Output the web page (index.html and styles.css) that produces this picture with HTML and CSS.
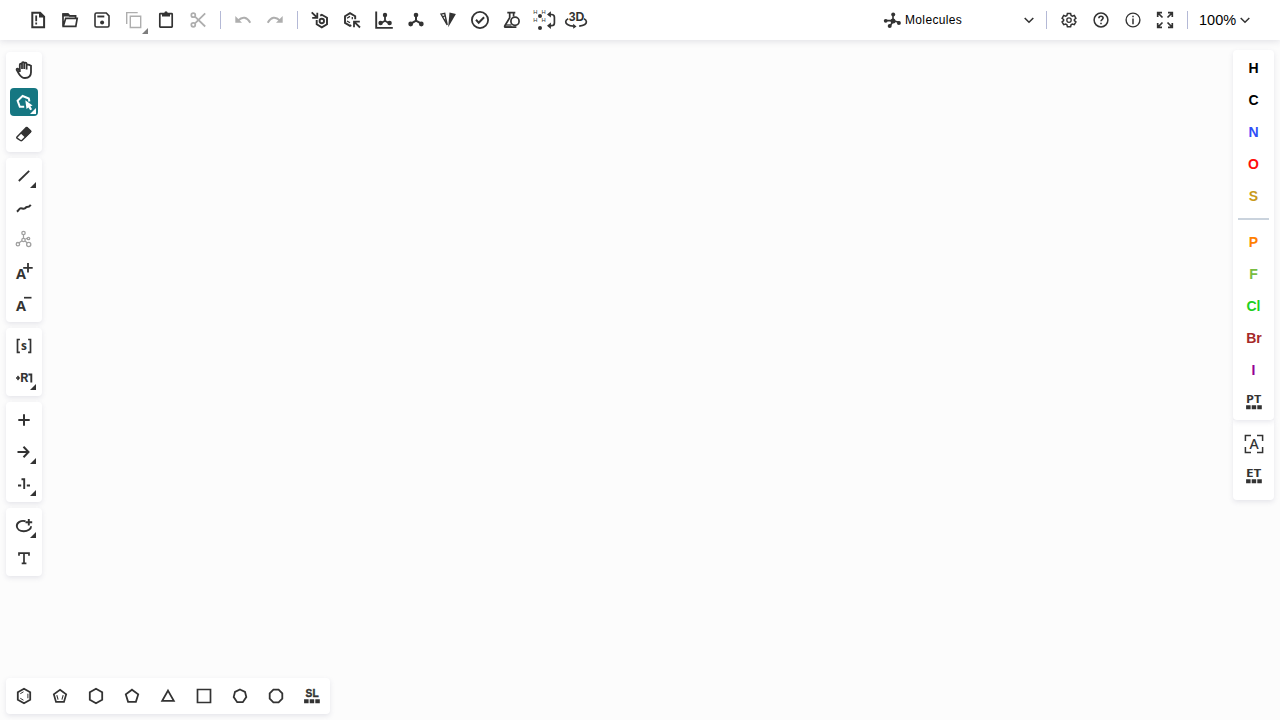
FILE: index.html
```html
<!DOCTYPE html>
<html lang="en">
<head>
<meta charset="utf-8">
<title>Ketcher</title>
<link rel="stylesheet" href="styles.css">
</head>
<body>
<div class="app">
<header class="topbar">
  <button class="btn"><svg viewBox="0 0 28 28"><path d="M8.300 6.700h7.800l4 4v10.600H8.300z" stroke-width="2"/><path d="M15 6v5.500h5.500z" class="solid"/><path d="M12.200 9.500v5.700M12.200 16.600v2" stroke-width="1.800"/></svg></button>
  <button class="btn"><svg viewBox="0 0 28 28"><path d="M7 20.300V8h4.800l1.800 1.800h6v2.300M7.300 20.300l2.400-8h11.500l-1.400 8z" stroke-width="1.700"/><path d="M6.500 7.200h5.800l1.600 2H19.500v1.300H6.500z" class="solid"/></svg></button>
  <button class="btn"><svg viewBox="0 0 28 28"><path d="M8.500 7h9.800l2.700 2.900v9.600q0 1.500-1.500 1.500h-11Q7 21 7 19.500v-11Q7 7 8.500 7z" stroke-width="1.600"/><path d="M9.300 10.500h7" stroke-width="1.900"/><circle cx="14.100" cy="16.400" r="2" class="solid"/></svg></button>
  <button class="btn disabled"><svg viewBox="0 0 28 28"><path d="M6.700 18V6.600h11M10.300 10.300h10.400v11.200H10.300z" stroke-width="1.400"/></svg><i class="corner low"></i></button>
  <button class="btn"><svg viewBox="0 0 28 28"><rect x="7.800" y="7.700" width="12.400" height="13.400" rx=".5" stroke-width="1.700"/><path d="M10 7h2.300q.2-1.700 1.700-1.700t1.700 1.700H18v3.500h-8z" class="solid"/></svg></button>
  <button class="btn disabled"><svg viewBox="0 0 28 28"><circle cx="9.300" cy="9.200" r="2" stroke-width="1.700"/><circle cx="9.300" cy="18.800" r="2" stroke-width="1.700"/><path d="M11 10.700l10.200 9.800M11 17.300L21.200 7.300" stroke-width="1.800"/></svg></button>
  <span class="sep"></span>
  <button class="btn disabled"><svg viewBox="0 0 28 28"><path d="M9 14.500Q16 8 21.300 16.700" stroke-width="2"/><path d="M6.300 10v6.800H13z" class="solid"/></svg></button>
  <button class="btn disabled"><svg viewBox="0 0 28 28"><path d="M19 14.500Q12 8 6.700 16.700" stroke-width="2"/><path d="M21.700 10v6.800H15z" class="solid"/></svg></button>
  <span class="sep"></span>
  <button class="btn"><svg viewBox="0 0 28 28"><path d="M10.700 14v4.300l5.100 3 5.200-3v-6.500l-5.200-3-1.600.9" stroke-width="1.900"/><circle cx="15.800" cy="15" r="2.200" stroke-width="1.900"/><path d="M5.700 6.300l5.300 5.200M11.300 6.800v5H6.200" stroke-width="1.800"/></svg></button>
  <button class="btn"><svg viewBox="0 0 28 28"><path d="M13.300 19.200l-1.300.7-5-3V10.200l5-3 5.200 3v3" stroke-width="1.900"/><path d="M9 12.200l3-1.800M9 15l3 1.800M14.300 11v2.200" stroke-width="1.300"/><path d="M16.500 16.200l5.500 5.300M16 21.300v-5.600h5.800" stroke-width="1.800"/></svg></button>
  <button class="btn"><svg viewBox="0 0 28 28"><path d="M6.200 5.500v16.400h16.600" stroke-width="1.900"/><path d="M15 9v5.700l-4.500 2.800M15 14.700l4.500 2.800" stroke-width="1.800"/><g class="solid"><circle cx="15" cy="9" r="2.200"/><circle cx="10.600" cy="17" r="2.200"/><circle cx="19.600" cy="17" r="2.200"/></g></svg></button>
  <button class="btn"><svg viewBox="0 0 28 28"><path d="M14 9v5.700l-5 3M14 14.700l5.300 3" stroke-width="2"/><g class="solid"><circle cx="14" cy="9" r="2.300"/><circle cx="8.700" cy="18" r="2.400"/><circle cx="19.300" cy="18" r="2.400"/></g></svg></button>
  <button class="btn"><svg viewBox="0 0 28 28"><path d="M7 8.100l3.700-.7 2.500 11.600z" stroke-width="1.400"/><path d="M8.500 10.700l2.500-.8M10 14l1.500-.5" stroke-width="1.200"/><path d="M15.500 6.600l6.400 1.300L14.200 21.300z" class="solid"/></svg></button>
  <button class="btn"><svg viewBox="0 0 28 28"><circle cx="14" cy="14" r="8.100" stroke-width="1.800"/><path d="M10 13.800l2.700 2.900 5.400-5.400" stroke-width="2"/></svg></button>
  <button class="btn"><svg viewBox="0 0 28 28"><path d="M9.300 6.700h8M11.700 7v4.800L7 19.500q-1 1.700.8 1.700h10.600M15.600 7v3.500" stroke-width="1.700"/><circle cx="17" cy="15.300" r="4.100" stroke-width="1.700"/><path d="M8 18h5l1 3H7z" class="solid" opacity=".65"/></svg></button>
  <button class="btn"><svg viewBox="0 0 28 28"><g class="glyph tiny"><text x="5.300" y="7.900">H</text><text x="13.500" y="7.900">H</text><text x="5.300" y="16">H</text><text x="13.500" y="16">H</text></g><circle cx="12" cy="10" r="2" class="solid" transform="translate(-2)"/><circle cx="10" cy="22" r="2" class="solid"/><path d="M19.500 8.500h2q2.900 0 2.900 2.700v5.800q0 2.700-2.900 2.700h-2" stroke-width="1.700"/><path d="M20.900 5.300v6.300l-3.900-3.100zM20.900 16.600v6.300L17 19.700z" class="solid"/></svg></button>
  <button class="btn"><svg viewBox="0 0 28 28"><text x="6.700" y="14.700" class="glyph three">3D</text><path d="M6.200 12.800q-2.500 1.200-2.500 2.900c0 2.400 3.500 4 8.100 4.500M22 12.800q2.400 1.200 2.400 2.900c0 2.200-2.900 3.800-7.200 4.400" stroke-width="1.700"/><path d="M11.200 17.700v5l3.300-2.300z" class="solid"/></svg></button>
  <div class="spacer"></div>
  <button class="mode"><svg class="molecule" viewBox="0 0 20 28"><path d="M2.700 14.600h6.500l7.600 2M10 8.400v7L7 20" stroke-width="1.600"/><g class="solid"><circle cx="2.700" cy="14.800" r="1.900"/><circle cx="10.200" cy="8.600" r="2"/><circle cx="10" cy="15" r="2.500"/><circle cx="15.900" cy="17" r="2"/><circle cx="6.700" cy="20" r="2"/></g></svg><span>Molecules</span><svg class="chevron" viewBox="0 0 12 12"><path d="M1.700 4L6 8.200 10.300 4" stroke-width="1.600"/></svg></button>
  <span class="sep"></span>
  <button class="btn"><svg viewBox="0 0 28 28"><path d="M12.400 7.500h3.200l.5 2 1.200.6 2-.6 1.600 2.800-1.500 1.200v1.200l1.500 1.200-1.600 2.700-2-.6-1.200.7-.5 2h-3.200l-.5-2-1.200-.7-2 .6-1.600-2.700 1.500-1.200v-1.200l-1.500-1.200 1.600-2.800 2 .6 1.200-.6z" stroke-width="1.500"/><circle cx="14" cy="14.100" r="2.200" stroke-width="1.300"/></svg></button>
  <button class="btn"><svg viewBox="0 0 28 28"><circle cx="14" cy="14" r="6.900" stroke-width="1.500"/><path d="M11.900 12.300q0-2 2.100-2t2.100 1.800c0 1.400-2.100 1.600-2.100 3.200M14 16.700v1.600" stroke-width="1.600"/></svg></button>
  <button class="btn"><svg viewBox="0 0 28 28"><circle cx="14" cy="14" r="6.900" stroke-width="1.400"/><path d="M14 9.800v1.500M14 12.500v5.700" stroke-width="1.500"/></svg></button>
  <button class="btn"><svg viewBox="0 0 28 28"><path d="M11.500 11.500L7 7M6.700 11V6.600H11M16.500 11.500L21 7M17 6.600h4.300V11M11.500 16.500L7 21M6.700 17v4.400H11M16.500 16.500L21 21M21.300 17v4.400H17" stroke-width="1.700"/></svg></button>
  <span class="sep"></span>
  <button class="zoom"><span>100%</span><svg class="chevron" viewBox="0 0 12 12"><path d="M1.700 4L6 8.200 10.300 4" stroke-width="1.500"/></svg></button>
</header>

<main class="workspace">
  <aside class="left">
    <div class="panel">
      <button class="btn"><svg viewBox="0 0 28 28"><path d="M9.800 16V8.800q0-1.200 1.100-1.200t1.100 1.200V13 7.300q0-1.200 1.100-1.200t1.100 1.200V13 7.800q0-1.200 1.200-1.200t1.200 1.200V13.400 9.700q0-1.100 1.200-1.100T21 9.700v6.600q0 5.700-6 5.700c-3.400 0-4.700-2-6.100-4.300L6.700 14q-.3-1.200.8-1.300t2.300 3.300" stroke-width="1.800"/></svg></button>
      <button class="btn active"><svg viewBox="0 0 28 28"><path d="M14.200 18.700l-4.400.1-2.200-6.100 5-4.700 6.200 2.500.6 3" stroke-width="2"/><path d="M15.300 12.300l7.300 5.200-2.200.8 1.700 3-1.900 1-1.800-2.900-1.900 1.600z" class="solid"/></svg><i class="corner"></i></button>
      <button class="btn"><svg viewBox="0 0 28 28"><path d="M7 16.900l9-9.200q.7-.5 1.300 0l3.200 3.100q.5.600 0 1.200l-8.600 8.500q-.7.500-1.400 0L7 18.100q-.5-.6 0-1.200z" stroke-width="1.500"/><path d="M16.700 7l4.800 4.500-6.200 6.300-4.800-4.600z" class="solid"/></svg></button>
    </div>
    <div class="panel">
      <button class="btn"><svg viewBox="0 0 28 28"><path d="M8.800 19L19.200 8.900" stroke-width="1.800"/></svg><i class="corner"></i></button>
      <button class="btn"><svg viewBox="0 0 28 28"><path d="M6.900 17.600c2-1.500 2.200-3.300 4-3.300 1.300 0 2.700.8 4 .1.800-.4.900-1.200 1.900-1.300 1.900-.1 2.500-.3 4-2.300" stroke-width="2"/></svg></button>
      <button class="btn faded"><svg viewBox="0 0 28 28"><path d="M13.500 9v3.500M12 14.800l-3.200 2.300M15 15l2.500 2M15.400 13.300l2-1.200" stroke-width="1.200"/><g stroke-width="1.300"><circle cx="13.500" cy="7" r="1.700"/><circle cx="13.500" cy="14" r="1.700"/><circle cx="7.900" cy="18.200" r="1.700"/><circle cx="18.500" cy="12.500" r="1.200"/><circle cx="18.700" cy="18.500" r="2.100"/></g></svg></button>
      <button class="btn"><svg viewBox="0 0 28 28"><text x="5.900" y="21" textLength="10" lengthAdjust="spacingAndGlyphs" class="glyph letter">A</text><path d="M13.200 9.800h9.500M18 5v9.500" stroke-width="1.800"/></svg></button>
      <button class="btn"><svg viewBox="0 0 28 28"><text x="5.900" y="21" textLength="10" lengthAdjust="spacingAndGlyphs" class="glyph letter">A</text><path d="M14 7.700h7.500" stroke-width="1.700"/></svg></button>
    </div>
    <div class="panel">
      <button class="btn"><svg viewBox="0 0 28 28"><path d="M9.900 7.500H7.500v12.800h2.400M18.100 7.500h2.400v12.800h-2.400" stroke-width="1.700"/><text x="11.100" y="18.300" textLength="5.900" lengthAdjust="spacingAndGlyphs" class="glyph sgroup">s</text></svg></button>
      <button class="btn"><svg viewBox="0 0 28 28"><path d="M6 14h3M7.500 12l1.700 2-1.700 2" stroke-width="1.400"/><text x="10.300" y="18.300" textLength="8.200" lengthAdjust="spacingAndGlyphs" class="glyph rone">R</text><path d="M18.400 10.500h2.900v8" stroke-width="1.900"/></svg><i class="corner"></i></button>
    </div>
    <div class="panel">
      <button class="btn"><svg viewBox="0 0 28 28"><path d="M8.300 14h11.400M14 8.300v11.400" stroke-width="2"/></svg></button>
      <button class="btn"><svg viewBox="0 0 28 28"><path d="M7.500 14h11M13.500 8.800l5 5.200-5 5.200" stroke-width="2"/></svg><i class="corner"></i></button>
      <button class="btn"><svg viewBox="0 0 28 28"><path d="M8 15.500h3.200M16.800 15.500H20M11.500 9.200h2.700V19" stroke-width="1.900"/></svg><i class="corner"></i></button>
    </div>
    <div class="panel">
      <button class="btn"><svg viewBox="0 0 28 28"><path d="M15.500 9.200C10.800 8.100 6.800 10.500 6.800 14c0 3 3 5.200 7 5.200s7.300-2.200 7.300-4.900" stroke-width="1.900"/><path d="M15.500 10.300h6.700M18.800 7v6.600" stroke-width="1.900"/></svg><i class="corner"></i></button>
      <button class="btn"><svg viewBox="0 0 28 28"><path d="M9 11.700V9.100h10v2.600M14 9v10.400M11.700 19.300h4.700" stroke-width="1.700"/></svg></button>
    </div>
  </aside>

  <aside class="right">
    <div class="atoms">
      <button class="atom h">H</button>
      <button class="atom c">C</button>
      <button class="atom n">N</button>
      <button class="atom o">O</button>
      <button class="atom s">S</button>
      <hr>
      <button class="atom p">P</button>
      <button class="atom f">F</button>
      <button class="atom cl">Cl</button>
      <button class="atom br">Br</button>
      <button class="atom i">I</button>
      <button class="btn"><svg viewBox="0 0 28 28"><text x="6" y="14.900" textLength="15.300" lengthAdjust="spacingAndGlyphs" class="glyph table">PT</text><path d="M6.100 17.300h4.500v3.900H6.100zM11.700 17.300h4.500v3.900h-4.500zM17.300 17.300h4.500v3.900h-4.500z" class="solid"/></svg></button>
    </div>
    <div class="extras">
      <button class="btn"><svg viewBox="0 0 28 28"><path d="M5.400 11V5.400H11M17 5.400h5.600V11M5.400 17v5.600H11M17 22.600h5.600V17" stroke-width="1.500"/><text x="9.500" y="19.200" textLength="9.200" lengthAdjust="spacingAndGlyphs" class="glyph any">A</text></svg></button>
      <button class="btn"><svg viewBox="0 0 28 28"><text x="6" y="14.900" textLength="15.300" lengthAdjust="spacingAndGlyphs" class="glyph table">ET</text><path d="M6.100 17.300h4.500v3.900H6.100zM11.700 17.300h4.500v3.900h-4.500zM17.300 17.300h4.500v3.900h-4.500z" class="solid"/></svg></button>
    </div>
  </aside>
</main>

<footer class="templates">
  <button class="btn"><svg viewBox="0 0 28 28"><path d="M14 6.800l6.200 3.500v7.400L14 21.200l-6.200-3.500v-7.400z" stroke-width="1.800"/><path d="M10.300 11.700l3.200-1.900M10.300 16.300l3.200 1.900M17.900 11.700v4.600" stroke-width="1"/></svg></button>
  <button class="btn"><svg viewBox="0 0 28 28"><path d="M14 7.700l6.200 4.600-2.200 7.500h-8l-2.200-7.500z" stroke-width="1.700"/><path d="M10.800 13.200l1.300 4.400M17.200 13.200l-1.300 4.400" stroke-width="1.100"/></svg></button>
  <button class="btn"><svg viewBox="0 0 28 28"><path d="M14 6.800l6.200 3.500v7.400L14 21.200l-6.200-3.500v-7.400z" stroke-width="1.800"/></svg></button>
  <button class="btn"><svg viewBox="0 0 28 28"><path d="M14 7.700l6.200 4.700-2.300 7.400h-7.800l-2.300-7.400z" stroke-width="1.800"/></svg></button>
  <button class="btn"><svg viewBox="0 0 28 28"><path d="M14 8.600l5.800 10.200H8.200z" stroke-width="1.800"/></svg></button>
  <button class="btn"><svg viewBox="0 0 28 28"><path d="M7.500 7.500h13v13h-13z" stroke-width="1.700"/></svg></button>
  <button class="btn"><svg viewBox="0 0 28 28"><path d="M14 7.500l5 2.400 1.300 5.200-3.500 5.100h-5.600l-3.500-5.100L9 9.900z" stroke-width="1.800"/></svg></button>
  <button class="btn"><svg viewBox="0 0 28 28"><path d="M11.400 7.700h5.200l3.700 3.700v5.200l-3.700 3.700h-5.200l-3.700-3.700v-5.200z" stroke-width="1.800"/></svg></button>
  <button class="btn"><svg viewBox="0 0 28 28"><text x="7.600" y="14.800" textLength="13" lengthAdjust="spacingAndGlyphs" class="glyph salts">SL</text><path d="M6.100 17.300h4.500v3.900H6.100zM11.700 17.300h4.500v3.900h-4.500zM17.300 17.300h4.500v3.900h-4.500z" class="solid"/></svg></button>
</footer>
</div>
</body>
</html>
```

FILE: styles.css
```css
* { box-sizing: border-box; }
body {
  margin: 0;
  background: #fcfcfc;
  font-family: "Liberation Sans", Arial, sans-serif;
  color: #000;
}
.app {
  height: 720px;
  display: flex;
  flex-direction: column;
  overflow: hidden;
}
button {
  border: 0;
  margin: 0;
  padding: 0;
  background: transparent;
  font: inherit;
  color: inherit;
}
svg {
  display: block;
  fill: none;
  stroke: currentColor;
}
.solid { fill: currentColor; stroke: none; }
.glyph {
  fill: currentColor;
  stroke: none;
  font-family: "Open Sans", sans-serif;
  font-weight: 700;
}
.tiny {
  font-family: "Liberation Sans", sans-serif;
  font-size: 5.800px;
  font-weight: 400;
  transform: translateX(-2px);
}
.three { font-family: "Liberation Sans", sans-serif; font-size: 12.200px; }
.letter { font-size: 13.500px; }
.sgroup { font-size: 13px; }
.rone { font-family: Roboto, sans-serif; font-size: 12px; }
.table { font-size: 11px; }
.salts {
  font-family: "Liberation Sans", sans-serif;
  font-size: 11px;
  stroke: currentColor;
  stroke-width: .4px;
}
.any { font-family: "Noto Sans", sans-serif; font-weight: 500; font-size: 14px; }

.topbar {
  flex: none;
  height: 40px;
  padding: 0 24px;
  display: flex;
  align-items: center;
  gap: 4px;
  background: #fff;
  box-shadow: 0 2px 6px rgba(103, 104, 132, .16);
}
.btn {
  position: relative;
  flex: none;
  width: 28px;
  height: 28px;
  border-radius: 4px;
  color: #333;
}
.btn svg { width: 28px; height: 28px; }
.disabled { color: #aeaeae; }
.faded { color: #a0a0a0; }
.active { background: #167782; color: #fff; }
.corner {
  position: absolute;
  right: 2px;
  bottom: 2px;
  width: 6px;
  height: 6px;
  background: currentColor;
  clip-path: polygon(100% 0, 100% 100%, 0 100%);
}
.corner.low { right: 0; bottom: 0; color: #7d7d7d; }
.sep {
  flex: none;
  width: 1px;
  height: 18px;
  margin: 0 4px;
  background: #b4b9d6;
}
.spacer { flex: 1; }
.mode {
  width: 155px;
  padding-right: 3px;
  display: flex;
  align-items: center;
  font-size: 12px;
  letter-spacing: .350px;
}
.molecule { width: 20px; height: 28px; margin-right: 2px; color: #333; }
.chevron { width: 12px; height: 12px; color: #333; }
.mode .chevron { margin-left: auto; }
.zoom {
  width: 60px;
  padding-left: 3px;
  display: flex;
  align-items: center;
  gap: 3px;
  font-size: 14.500px;
}

.workspace {
  flex: 1;
  padding: 10px 6px 0;
  display: flex;
  justify-content: space-between;
  align-items: flex-start;
}
.left {
  padding-top: 2px;
  display: flex;
  flex-direction: column;
  gap: 6px;
}
.panel, .atoms, .extras, .templates {
  background: #fff;
  border-radius: 4px;
  box-shadow: 0 2px 5px rgba(103, 104, 132, .15);
}
.panel {
  width: 36px;
  padding: 4px;
  display: flex;
  flex-direction: column;
  gap: 4px;
}
.right { width: 41px; }
.atoms, .extras {
  display: flex;
  flex-direction: column;
  align-items: center;
  gap: 4px;
}
.atoms { height: 370px; padding-top: 4px; position: relative; }
.extras { height: 80px; padding-top: 10px; border-radius: 0 0 4px 4px; }
.atom {
  width: 28px;
  height: 28px;
  font-size: 14px;
  font-weight: 700;
  text-align: center;
}
.right hr {
  width: 31px;
  height: 2px;
  margin: 4px 0;
  border: 0;
  background: #cad3dd;
}
.h, .c { color: #000; }
.n { color: #304ff7; }
.o { color: #ff0d0d; }
.s { color: #c99a19; }
.p { color: #ff8000; }
.f { color: #78bc42; }
.cl { color: #1fd01f; }
.br { color: #a62929; padding-left: 1px; }
.i { color: #940094; }

.templates {
  flex: none;
  align-self: flex-start;
  height: 36px;
  margin: 0 0 6px 6px;
  padding: 4px;
  display: flex;
  gap: 8px;
}
```
